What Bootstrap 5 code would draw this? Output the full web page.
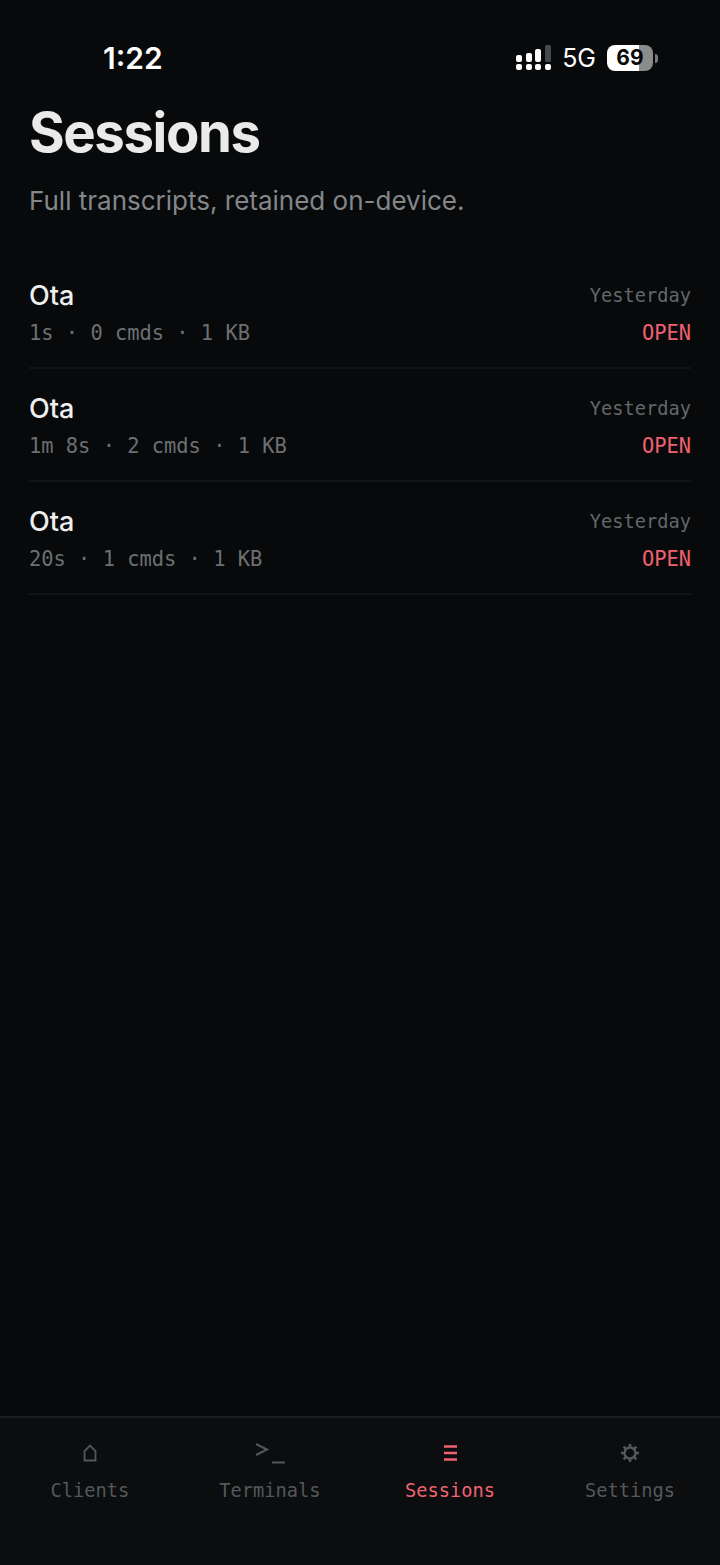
<!DOCTYPE html>
<html lang="en">
<head>
  <meta charset="UTF-8" />
  <meta name="viewport" content="width=device-width, initial-scale=1.0" />
  <title>Sessions</title>
  <link href="https://cdn.jsdelivr.net/npm/bootstrap@5.3.0/dist/css/bootstrap.min.css" rel="stylesheet" />
  <style>
    html, body { height: 100%; }
    body { background: #08090b; font-family: Inter, sans-serif; color: #eee; }
    .mono { font-family: "DejaVu Sans Mono", "Liberation Mono", monospace; }
    .app-screen { height: 1565px; }
    .status-bar { height: 88px; padding: 35px 62px 0 103px; }
    .status-time { font-size: 30px; font-weight: 600; line-height: 46px; color: #fff; }
    .status-net { font-size: 25px; line-height: 46px; color: #fff; margin: 0 11px 0 10px; }
    .battery { width: 46px; height: 26px; border-radius: 8px; background: linear-gradient(90deg, #fff 69%, #8b8d8c 69%); color: #08090b; font-size: 21px; font-weight: 700; line-height: 26px; text-align: center; }
    .battery-tip { width: 3px; height: 9px; background: #77797a; border-radius: 0 4px 4px 0; margin-left: 2px; }
    .page-head { padding: 0 29px; }
    .page-title { font-size: 54.5px; font-weight: 700; letter-spacing: -1.4px; line-height: 60px; color: #eaeaea; margin: 14px 0 0; }
    .page-sub { font-size: 26px; line-height: 36px; color: #83878a; margin: 21px 0 0; }
    .session-list { margin: 37px 29px 0; }
    .session-row { height: 113px; padding-top: 21px; border-bottom: 2px solid #111316; }
    .session-name { font-size: 27px; font-weight: 500; line-height: 37px; color: #eeeeee; }
    .session-meta { font-size: 20.400px; line-height: 38px; color: #6c7072; }
    .session-when { font-size: 18.700px; line-height: 37px; color: #63676a; }
    .session-state { font-size: 20.400px; line-height: 38px; color: #f0626f; }
    .tab-bar { height: 149px; background: #0b0d0f; border-top: 2px solid #1a1c1f; }
    .tab-item { width: 25%; padding-top: 16px; color: #53585a; }
    .tab-item.on { color: #f0626f; }
    .tab-icon { height: 37px; margin-bottom: 1px; }
    .tab-label { font-size: 18.700px; line-height: 38px; }
  </style>
</head>
<body>
  <div class="app-screen d-flex flex-column">
    <div class="status-bar d-flex align-items-start justify-content-between">
      <span class="status-time">1:22</span>
      <div class="d-flex align-items-center">
        <svg width="36" height="26" viewBox="0 0 36 26" fill="#fff">
          <rect x="0" y="10" width="6" height="7" rx="2"/><rect x="10" y="8" width="6" height="9" rx="2"/><rect x="19" y="4" width="6" height="13" rx="2"/><rect x="29" y="0" width="6" height="17" rx="1.500" fill="#48494b"/>
          <rect x="0" y="19" width="6" height="6" rx="2"/><rect x="10" y="19" width="6" height="6" rx="2"/><rect x="19" y="19" width="6" height="6" rx="2"/><rect x="29" y="19" width="6" height="6" rx="2"/>
        </svg>
        <span class="status-net">5G</span>
        <div class="battery">69</div>
        <div class="battery-tip"></div>
      </div>
    </div>

    <div class="page-head">
      <h1 class="page-title">Sessions</h1>
      <p class="page-sub">Full transcripts, retained on-device.</p>
    </div>

    <div class="session-list flex-grow-1">
      <div class="session-row">
        <div class="d-flex justify-content-between"><span class="session-name">Ota</span><span class="session-when mono">Yesterday</span></div>
        <div class="d-flex justify-content-between"><span class="session-meta mono">1s · 0 cmds · 1 KB</span><span class="session-state mono">OPEN</span></div>
      </div>
      <div class="session-row">
        <div class="d-flex justify-content-between"><span class="session-name">Ota</span><span class="session-when mono">Yesterday</span></div>
        <div class="d-flex justify-content-between"><span class="session-meta mono">1m 8s · 2 cmds · 1 KB</span><span class="session-state mono">OPEN</span></div>
      </div>
      <div class="session-row">
        <div class="d-flex justify-content-between"><span class="session-name">Ota</span><span class="session-when mono">Yesterday</span></div>
        <div class="d-flex justify-content-between"><span class="session-meta mono">20s · 1 cmds · 1 KB</span><span class="session-state mono">OPEN</span></div>
      </div>
    </div>

    <div class="tab-bar d-flex">
      <div class="tab-item text-center mono">
        <div class="tab-icon d-flex align-items-center justify-content-center">
          <svg width="14" height="18" viewBox="0 0 14 18" fill="none" stroke="currentColor" stroke-width="1.800"><path d="M1.500 16.500V7L7 1.500 12.500 7v9.500z"/></svg>
        </div>
        <div class="tab-label">Clients</div>
      </div>
      <div class="tab-item text-center mono">
        <div class="tab-icon d-flex align-items-center justify-content-center">
          <svg width="30" height="22" viewBox="0 0 30 22" fill="none" stroke="currentColor" stroke-width="2"><path d="M1 2l11 5.500L1 13M17 20.500h13"/></svg>
        </div>
        <div class="tab-label">Terminals</div>
      </div>
      <div class="tab-item on text-center mono">
        <div class="tab-icon d-flex align-items-center justify-content-center">
          <svg width="13" height="16" viewBox="0 0 13 16" fill="none" stroke="currentColor" stroke-width="2.400"><path d="M0 1.500h13M0 8h13M0 14.500h13"/></svg>
        </div>
        <div class="tab-label">Sessions</div>
      </div>
      <div class="tab-item text-center mono">
        <div class="tab-icon d-flex align-items-center justify-content-center">
          <svg width="18" height="18" viewBox="0 0 18 18" fill="none" stroke="currentColor"><circle cx="9" cy="9" r="5.500" stroke-width="2.400"/><path stroke-width="2.600" d="M9 0v3M9 15v3M0 9h3M15 9h3M2.600 2.600l2.200 2.200M13.200 13.200l2.200 2.200M2.600 15.400l2.200-2.200M13.200 4.800l2.200-2.200"/></svg>
        </div>
        <div class="tab-label">Settings</div>
      </div>
    </div>
  </div>
  <script src="https://cdn.jsdelivr.net/npm/bootstrap@5.3.0/dist/js/bootstrap.bundle.min.js"></script>
</body>
</html>
